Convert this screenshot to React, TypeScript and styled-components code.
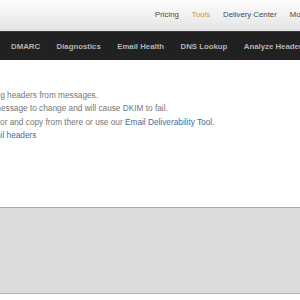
import styled, { createGlobalStyle } from "styled-components";

const GlobalStyle = createGlobalStyle`
    html, body {
        margin: 0;
        padding: 0;
        background: #ffffff;
        overflow: hidden;
    }
    body {
        font-family: "Liberation Sans", Arial, Helvetica, sans-serif;
    }
`;

const Page = styled.div`
    width: 300px;
    height: 300px;
    overflow: hidden;
    display: flex;
    flex-direction: column;
`;

const TopBar = styled.div`
    height: 31px;
    flex-shrink: 0;
    background: linear-gradient(to bottom, #fdfdfd 0%, #f1f1f1 50%, #e3e3e3 100%);
    display: flex;
    align-items: center;
    padding-left: 155px;
    gap: 13px;
    white-space: nowrap;
`;

type TopLinkProps = {
    $active?: boolean;
};

const TopLink = styled.a<TopLinkProps>`
    font-size: 7.8px;
    color: ${props => props.$active ? '#d8914e' : '#4a4a4a'};
    text-decoration: none;
    margin-top: -2px;
`;

const ToolBar = styled.div`
    height: 29px;
    flex-shrink: 0;
    background: #212121;
    border-top: 1px solid #3a3a3a;
    box-sizing: border-box;
    display: flex;
    align-items: center;
    padding-left: 11px;
    gap: 16.5px;
    white-space: nowrap;
`;

const ToolLink = styled.a`
    font-size: 7.8px;
    font-weight: bold;
    color: #b4b4b4;
    text-decoration: none;
`;

const Content = styled.div`
    height: 147px;
    flex-shrink: 0;
    box-sizing: border-box;
    padding-top: 29px;
    font-size: 8.28px;
    line-height: 13.4px;
    color: #767676;
`;

type LineProps = {
    $shift: number;
};

const Line = styled.p<LineProps>`
    margin: 0 0 0 ${props => props.$shift}px;
    white-space: nowrap;
`;

const TextLink = styled.a`
    color: #3c6ea6;
    text-decoration: none;
`;

const Footer = styled.div`
    height: 87px;
    flex-shrink: 0;
    box-sizing: border-box;
    background: #dcdcdc;
    border-top: 1px solid #ababab;
    border-bottom: 1px solid #b4b4b4;
`;

const topLinks = ['Pricing', 'Tools', 'Delivery Center', 'More'];
const toolLinks = ['DMARC', 'Diagnostics', 'Email Health', 'DNS Lookup', 'Analyze Headers'];

export default function App() {
    return <Page>
        <GlobalStyle />
        <TopBar>
            {topLinks.map(label => <TopLink key={label} $active={label === 'Tools'}>{label}</TopLink>)}
        </TopBar>
        <ToolBar>
            {toolLinks.map(label => <ToolLink key={label}>{label}</ToolLink>)}
        </ToolBar>
        <Content>
            <Line $shift={-20.5}>routing headers from messages.</Line>
            <Line $shift={-19.7}>the message to change and will cause DKIM to fail.</Line>
            <Line $shift={-13.3}>editor and copy from there or use our <TextLink>Email Deliverability Tool</TextLink>.</Line>
            <Line $shift={-15.5}><TextLink>email headers</TextLink></Line>
        </Content>
        <Footer />
    </Page>
}
